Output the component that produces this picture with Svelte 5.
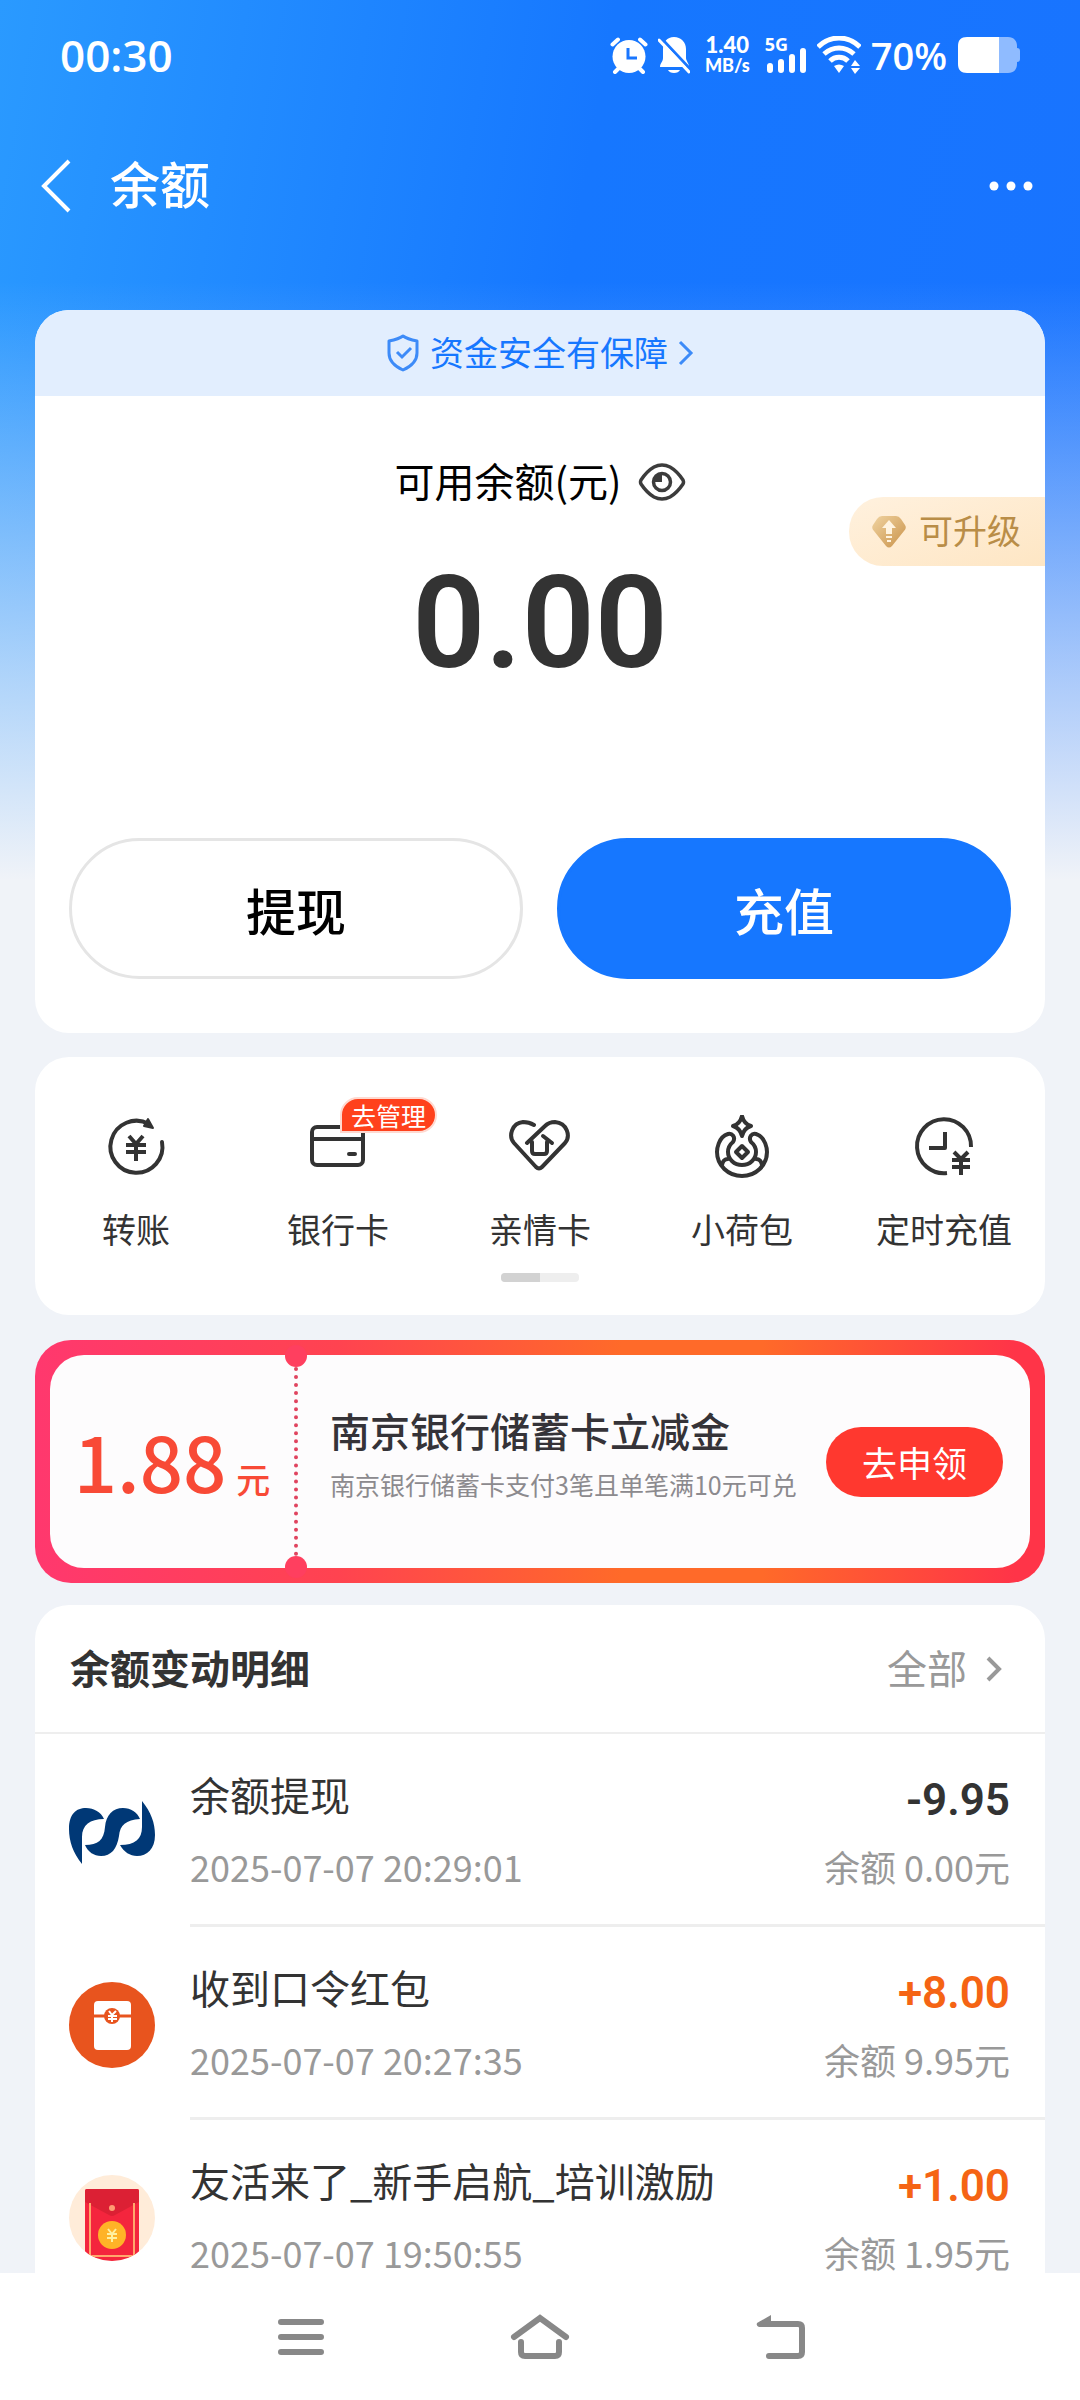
<script lang="ts">
	// Balance page of a wallet app: balance card, shortcuts, promo coupon and change log.
	interface Entry {
		icon: 'bank' | 'packet' | 'envelope';
		title: string;
		time: string;
		amount: string;
		balance: string;
	}

	const shortcuts = [
		{ id: 'transfer', label: '转账', badge: '' },
		{ id: 'card', label: '银行卡', badge: '去管理' },
		{ id: 'family', label: '亲情卡', badge: '' },
		{ id: 'purse', label: '小荷包', badge: '' },
		{ id: 'timer', label: '定时充值', badge: '' }
	];

	const entries: Entry[] = [
		{
			icon: 'bank',
			title: '余额提现',
			time: '2025-07-07 20:29:01',
			amount: '-9.95',
			balance: '0.00'
		},
		{
			icon: 'packet',
			title: '收到口令红包',
			time: '2025-07-07 20:27:35',
			amount: '+8.00',
			balance: '9.95'
		},
		{
			icon: 'envelope',
			title: '友活来了_新手启航_培训激励',
			time: '2025-07-07 19:50:55',
			amount: '+1.00',
			balance: '1.95'
		}
	];

	let hidden = $state(false);
</script>

<div class="screen">
	<div class="content">
		<div class="backdrop"></div>

		<div class="status-bar">
			<span class="clock">00:30</span>
			<div class="status-icons">
				<svg width="38" height="38" viewBox="0 0 38 38">
					<g stroke="#fff" stroke-width="4" stroke-linecap="round" fill="none">
						<path d="M2.500 8.500L8 3.500M35.500 8.500L30 3.500M8 33L5 36M30 33L33 36"></path>
					</g>
					<circle cx="19" cy="20.500" r="16.500" fill="#fff"></circle>
					<path d="M18 12v10h9" fill="none" stroke="#1976ff" stroke-width="3"></path>
				</svg>
				<svg width="32" height="38" viewBox="0 0 32 38">
					<path
						d="M16 1c7 0 12 5 12 12v9c0 3 3 5 3 9H2c0-4 3-5 3-9v-9C5 6 9 1 16 1z"
						fill="#fff"
					></path>
					<path d="M10 34h12c-1 2-3 3-6 3s-5-1-6-3z" fill="#fff"></path>
					<path d="M3 2l30 32" stroke="#1976ff" stroke-width="3"></path>
					<path d="M1 4l30 32" stroke="#fff" stroke-width="3" stroke-linecap="round"></path>
				</svg>
				<div class="speed">
					<span>1.40</span>
					<span class="unit">MB/s</span>
				</div>
				<div class="signal">
					<span>5G</span>
					<svg width="42" height="38" viewBox="0 0 42 38">
						<path
							d="M5 30v4M16 26v8M27 21v13M38 15v19"
							stroke="#fff"
							stroke-width="6"
							stroke-linecap="round"
						></path>
					</svg>
				</div>
				<svg width="44" height="38" viewBox="0 0 44 38">
					<g fill="none" stroke="#fff" stroke-width="5">
						<path d="M1 11C13-1 31-1 43 11"></path>
						<path d="M7 18c9-8 21-8 30 0"></path>
						<path d="M13 25c5-5 13-5 18 0"></path>
					</g>
					<path d="M17 30q5-3 10 0l-5 7zM34 30l4-6 5 6zM34 32h9l-5 6z" fill="#fff"></path>
				</svg>
				<span class="percent">70%</span>
				<svg width="63" height="38" viewBox="0 0 63 38">
					<path
						d="M42 1h9c6 0 9 4 9 9v2c2 0 3 1 3 3v8c0 2-1 3-3 3v2c0 5-3 9-9 9h-9z"
						fill="#8fbbff"
					></path>
					<path d="M10 1h32v36H10c-6 0-9-3-9-9V10c0-6 3-9 9-9z" fill="#fff"></path>
				</svg>
			</div>
		</div>

		<header>
			<button class="back" aria-label="返回">
				<svg width="32" height="54" viewBox="0 0 32 54">
					<path d="M29 2L4 27l25 25" fill="none" stroke="#fff" stroke-width="4"></path>
				</svg>
			</button>
			<h1>余额</h1>
			<button class="more" aria-label="更多">
				<svg width="44" height="10" viewBox="0 0 44 10" fill="#fff">
					<circle cx="5" cy="5" r="4.500"></circle>
					<circle cx="22" cy="5" r="4.500"></circle>
					<circle cx="39" cy="5" r="4.500"></circle>
				</svg>
			</button>
		</header>

		<main>
			<section class="card balance">
				<a class="safety" href="#safety">
					<svg width="34" height="38" viewBox="0 0 34 38" fill="none" stroke="#3d8bf8">
						<path
							d="M17 2c4 3 9 4 14 5v12c0 8-5 13-14 17C8 32 3 27 3 19V7c5-1 10-2 14-5z"
							stroke-width="3"
							stroke-linejoin="round"
						></path>
						<path d="M11 18l5 5 9-9" stroke-width="3"></path>
					</svg>
					<span>资金安全有保障</span>
					<svg width="16" height="26" viewBox="0 0 16 26" fill="none" stroke="#3d8bf8">
						<path d="M2 2l11 11L2 24" stroke-width="3"></path>
					</svg>
				</a>
				<a class="upgrade" href="#upgrade">
					<svg width="36" height="34" viewBox="0 0 36 34">
						<defs>
							<linearGradient id="gold" x1="0" y1="0" x2="1" y2="1">
								<stop offset="0" stop-color="#f0d3a0"></stop>
								<stop offset="1" stop-color="#c9924a"></stop>
							</linearGradient>
						</defs>
						<path
							d="M11 1h14q3 0 5 3l4 6q2 3-1 6L21 31q-3 3-6 0L3 16q-3-3-1-6l4-6q2-3 5-3z"
							fill="url(#gold)"
						></path>
						<path d="M18 5l7 8h-4v6h-6v-6h-4zM15 21h6v2h-6zM16 25h4v2h-4z" fill="#fff3df"></path>
					</svg>
					<span>可升级</span>
				</a>
				<div class="label">
					<span>可用余额(元)</span>
					<button class="eye" aria-label="隐藏余额" onclick={() => (hidden = !hidden)}>
						<svg width="48" height="38" viewBox="0 0 48 38" fill="none" stroke="#3c3c3c">
							<path
								d="M3 17Q9 8 16 4q8-4 16 0 7 4 13 13 1 2 0 4-6 9-13 13-8 4-16 0Q9 30 3 21q-1-2 0-4z"
								stroke-width="3.500"
							></path>
							<circle cx="24" cy="19" r="8.500" stroke-width="3.500"></circle>
							<path d="M24 11v8h-8a8 8 0 0 1 8-8z" fill="#3c3c3c" stroke="none"></path>
						</svg>
					</button>
				</div>
				<div class="total">{hidden ? '****' : '0.00'}</div>
				<div class="actions">
					<button>提现</button>
					<button class="primary">充值</button>
				</div>
			</section>

			<section class="card shortcuts">
				<div class="grid">
					{#each shortcuts as item (item.id)}
						<a href="#{item.id}">
							<span class="icon">
								<svg
									width="64"
									height="64"
									viewBox="0 0 64 64"
									fill="none"
									stroke="#333"
									stroke-width="4"
									stroke-linecap="round"
									stroke-linejoin="round"
								>
									{#if item.id === 'transfer'}
										<path d="M58 27A26 26 0 1 1 45 9"></path>
										<path d="M44 4l5 9-9-2z" fill="#333" stroke-width="2"></path>
										<path
											d="M25 21l7 8 7-8M22 30h20M22 37h20M32 30v16"
											stroke-linecap="butt"
										></path>
									{:else if item.id === 'card'}
										<rect x="6" y="12" width="51" height="38" rx="5"></rect>
										<path d="M6 24h51M43 39h6"></path>
									{:else if item.id === 'family'}
										<path
											d="M26 10Q21 7 15 7C4 8 0 21 6 28l22 24q3 3 6 0l23-24C63 21 59 8 47 7q-6 0-10 4L19 28"
										></path>
										<path d="M35 21l9 7M24 27v9q0 3 3 3h9q3 0 3-3v-9"></path>
									{:else if item.id === 'purse'}
										<path d="M32 1q2 8 9 10-7 2-9 10-2-8-9-10 7-2 9-10z"></path>
										<path
											d="M23 27c3-5-1-9-5-8C8 22 7 35 7 37a25 24 0 0 0 50 0c0-2-1-15-11-18-4-1-8 3-5 8 5 4 5 8 5 10a14 13 0 0 1-28 0c0-2 0-6 5-10z"
										></path>
										<path d="M12 50q1-6 6-6M52 50q-1-6-6-6"></path>
										<path d="M32 31l6 6-6 6-6-6z"></path>
									{:else}
										<path d="M59 32A27 27 0 1 0 35 58" stroke-linecap="butt"></path>
										<path d="M33 17v16H17" stroke-linecap="butt"></path>
										<path d="M42 37l7 7 7-7M40 45h18M40 52h18M49 44v16" stroke-linecap="butt"></path>
									{/if}
								</svg>
								{#if item.badge}
									<em>{item.badge}</em>
								{/if}
							</span>
							{item.label}
						</a>
					{/each}
				</div>
				<div class="pager"><span></span></div>
			</section>

			<section class="promo">
				<div class="coupon">
					<p class="value">1.88<small>元</small></p>
					<div class="perforation"></div>
					<div class="offer">
						<h2>南京银行储蓄卡立减金</h2>
						<p>南京银行储蓄卡支付3笔且单笔满10元可兑</p>
					</div>
					<button>去申领</button>
				</div>
			</section>

			<section class="card log">
				<div class="log-head">
					<h2>余额变动明细</h2>
					<a href="#all">
						<span>全部</span>
						<svg width="18" height="28" viewBox="0 0 18 28" fill="none" stroke="#999">
							<path d="M3 3l11 11L3 25" stroke-width="4"></path>
						</svg>
					</a>
				</div>
				<ul>
					{#each entries as entry (entry.time)}
						<li>
							<svg width="86" height="92" viewBox="0 0 86 92">
								{#if entry.icon === 'bank'}
									<g fill="#003876">
										<path d="M13 79C4 68 0 56 0 44 0 29 7 23 17 23c8 0 15 4 18 11-14 0-22 6-22 18z"></path>
										<path
											d="M16 60c13 0 19-5 20-18 1-12 8-19 18-19 8 0 14 4 17 11-14 1-20 6-21 17-2 13-8 20-18 20-7 0-13-4-16-11z"
										></path>
										<path d="M73 16c9 11 13 22 13 34 0 14-8 21-18 21-7 0-13-4-17-11 15 0 22-6 22-18z"></path>
									</g>
								{:else if entry.icon === 'packet'}
									<circle cx="43" cy="47" r="43" fill="#e8541e"></circle>
									<rect x="25" y="23" width="37" height="49" rx="4" fill="#fff"></rect>
									<path d="M25 38h37" stroke="#e8541e" stroke-width="3"></path>
									<circle cx="43" cy="38" r="8" fill="#e8541e"></circle>
									<path
										d="M40 33l3 4 4-4M39 38h9M39 41h9M43 37v7"
										fill="none"
										stroke="#fff"
										stroke-width="2"
									></path>
								{:else}
									<clipPath id="round"><circle cx="43" cy="47" r="43"></circle></clipPath>
									<g clip-path="url(#round)">
										<rect width="86" height="92" fill="#ffecd9"></rect>
										<path d="M16 20q0-2 2-2h50q2 0 2 2v73H16z" fill="#f4253d"></path>
										<path d="M16 20q0-2 2-2h50q2 0 2 2v11L46 44q-3 2-6 0L16 31z" fill="#dc2034"></path>
										<path
											d="M21 32v53M65 32v53M17 85h52"
											stroke="#ffa76c"
											stroke-width="2"
										></path>
										<circle cx="43" cy="37" r="3" fill="#ff9d72"></circle>
										<circle cx="43" cy="64" r="14" fill="#ffb327"></circle>
										<path
											d="M39 58l4 5 4-5M38 63h10M38 67h10M43 63v8"
											fill="none"
											stroke="#fff0a0"
											stroke-width="2"
										></path>
									</g>
								{/if}
							</svg>
							<div class="entry">
								<div class="line">
									<span>{entry.title}</span>
									<strong class:income={entry.amount.startsWith('+')}>{entry.amount}</strong>
								</div>
								<div class="line meta">
									<time>{entry.time}</time>
									<span>余额 {entry.balance}元</span>
								</div>
							</div>
						</li>
					{/each}
				</ul>
			</section>
		</main>
	</div>

	<nav>
		<button aria-label="最近任务">
			<svg width="46" height="44" viewBox="0 0 46 44">
				<path
					d="M3 7h40M3 22h40M3 37h40"
					stroke="#888"
					stroke-width="6"
					stroke-linecap="round"
				></path>
			</svg>
		</button>
		<button aria-label="主屏幕">
			<svg width="60" height="46" viewBox="0 0 60 46">
				<path
					d="M4 23L30 4l26 19M11 28v10q0 4 4 4h30q4 0 4-4V28"
					fill="none"
					stroke="#888"
					stroke-width="6"
					stroke-linecap="round"
				></path>
			</svg>
		</button>
		<button aria-label="后退">
			<svg width="50" height="46" viewBox="0 0 50 46">
				<path
					d="M13 42h29q4 0 4-4V14q0-4-4-4H6"
					fill="none"
					stroke="#888"
					stroke-width="6"
					stroke-linecap="round"
				></path>
				<path d="M1 9l14-8v12H3q-3-1-2-4z" fill="#888"></path>
			</svg>
		</button>
	</nav>
</div>

<style>
	:global(body) {
		background: #f0f3f8;
	}

	.screen {
		display: flex;
		flex-direction: column;
		height: 100vh;
		font-family: 'Noto Sans CJK SC', sans-serif;
		color: #333;
	}

	.content {
		position: relative;
		flex: 1;
		min-height: 0;
		overflow-y: auto;
		scrollbar-width: none;
	}

	.backdrop {
		position: absolute;
		inset: 0 0 auto;
		height: 880px;
		background:
			linear-gradient(
				to bottom,
				rgba(240, 243, 248, 0) 32%,
				rgba(240, 243, 248, 0.36) 56%,
				rgba(240, 243, 248, 0.68) 77%,
				#f0f3f8
			),
			linear-gradient(100deg, #2a9aff, #1677ff 50%, #1973ff);
	}

	.status-bar,
	header,
	main {
		position: relative;
	}

	h1,
	h2,
	p,
	ul {
		margin: 0;
		padding: 0;
	}

	a {
		color: inherit;
		text-decoration: none;
	}

	button {
		border: none;
		background: none;
		padding: 0;
		font-family: inherit;
		color: inherit;
		cursor: pointer;
	}

	svg {
		display: block;
		flex: none;
	}

	.status-bar {
		display: flex;
		align-items: center;
		justify-content: space-between;
		height: 110px;
		padding: 0 60px;
		color: #fff;
		font-family: 'Open Sans', sans-serif;
	}

	.clock {
		font-size: 44px;
		font-weight: 600;
	}

	.status-icons {
		display: flex;
		align-items: center;
		gap: 10px;
	}

	.speed {
		display: flex;
		flex-direction: column;
		align-items: center;
		padding: 0 5px;
		font-family: Lato, sans-serif;
		font-size: 22px;
		font-weight: 900;
		line-height: 20px;
	}

	.speed .unit {
		font-size: 18px;
	}

	.signal {
		position: relative;
	}

	.signal span {
		position: absolute;
		top: 0;
		left: 0;
		font-size: 18px;
		font-weight: 700;
		line-height: 16px;
	}

	.percent {
		font-size: 38px;
		font-weight: 600;
	}

	header {
		display: flex;
		align-items: center;
		height: 152px;
		padding: 0 47px 0 40px;
		color: #fff;
	}

	h1 {
		flex: 1;
		margin-left: 38px;
		padding-bottom: 8px;
		font-size: 50px;
		font-weight: 500;
		line-height: 60px;
	}

	main {
		padding: 48px 35px 0;
	}

	.card {
		overflow: hidden;
		border-radius: 34px;
		background: #fff;
	}

	.balance {
		position: relative;
		padding-bottom: 54px;
	}

	.safety {
		display: flex;
		align-items: center;
		justify-content: center;
		gap: 10px;
		height: 86px;
		background: #e2eefe;
		color: #1677ff;
		font-size: 34px;
	}

	.safety span,
	.upgrade span,
	.label span,
	.log-head h2,
	.log-head span {
		padding-bottom: 4px;
	}

	.upgrade {
		position: absolute;
		top: 187px;
		right: 0;
		display: flex;
		align-items: center;
		gap: 12px;
		height: 69px;
		padding: 0 24px 0 22px;
		border-radius: 34px 0 0 34px;
		background: linear-gradient(160deg, #fff1de, #fee6c4);
		color: #b98d47;
		font-size: 34px;
	}

	.label {
		display: flex;
		align-items: center;
		justify-content: center;
		gap: 16px;
		height: 60px;
		margin-top: 56px;
		color: #000;
		font-size: 40px;
		line-height: 56px;
	}

	.total {
		margin-top: 36px;
		font-family: Roboto, sans-serif;
		font-size: 128px;
		font-weight: 600;
		line-height: 150px;
		text-align: center;
	}

	.actions {
		display: flex;
		gap: 34px;
		margin-top: 140px;
		padding: 0 34px;
	}

	.actions button {
		flex: 1;
		height: 141px;
		border: 3px solid #e5e5e5;
		border-radius: 71px;
		color: #000;
		font-size: 50px;
		font-weight: 500;
	}

	.actions .primary {
		border-color: #1677ff;
		background: #1677ff;
		color: #fff;
	}

	.shortcuts {
		margin-top: 24px;
		padding: 58px 0 33px;
	}

	.grid {
		display: grid;
		grid-template-columns: repeat(5, 1fr);
	}

	.grid a {
		display: flex;
		flex-direction: column;
		align-items: center;
		gap: 26px;
		font-size: 34px;
		line-height: 48px;
	}

	.icon {
		position: relative;
	}

	.icon em {
		position: absolute;
		top: -18px;
		left: 34px;
		padding: 0 9px;
		border: 2px solid #ffd9d0;
		border-radius: 18px 18px 18px 0;
		background: #ff411c;
		color: #fff;
		font-size: 25px;
		font-style: normal;
		line-height: 32px;
		white-space: nowrap;
	}

	.pager {
		width: 78px;
		height: 9px;
		margin: 20px auto 0;
		overflow: hidden;
		border-radius: 4px;
		background: #eee;
	}

	.pager span {
		display: block;
		width: 50%;
		height: 100%;
		background: #d2d2d2;
	}

	.promo {
		margin-top: 25px;
		padding: 15px;
		border-radius: 36px;
		background: linear-gradient(to right, #ff386e, #ff4350 30%, #ff6a29 58%, #ff6a29 72%, #ff3448 97%);
	}

	.coupon {
		position: relative;
		display: flex;
		align-items: center;
		height: 213px;
		border-radius: 34px;
		background: #fdfcfd;
	}

	.value {
		box-sizing: border-box;
		width: 244px;
		padding-top: 16px;
		color: #f84a36;
		font-size: 76px;
		font-weight: 500;
		line-height: 100px;
		text-align: center;
		white-space: nowrap;
	}

	.value small {
		margin-left: 10px;
		font-size: 34px;
	}

	.perforation {
		position: relative;
		align-self: stretch;
		margin: 12px 0;
		border-left: 4px dotted #e0445f;
	}

	.perforation::before,
	.perforation::after {
		content: '';
		position: absolute;
		left: -13px;
		width: 22px;
		height: 22px;
		border-radius: 50%;
		background: #ff3f5f;
	}

	.perforation::before {
		top: -22px;
	}

	.perforation::after {
		bottom: -22px;
	}

	.offer {
		flex: 1;
		margin-left: 32px;
		padding-bottom: 16px;
		color: #8c8a8e;
		font-size: 25px;
		line-height: 48px;
		white-space: nowrap;
	}

	.offer h2 {
		color: #353338;
		font-size: 40px;
		font-weight: 500;
		line-height: 60px;
	}

	.coupon button {
		height: 70px;
		margin-right: 27px;
		padding: 0 36px;
		border-radius: 35px;
		background: #ff382f;
		color: #fff;
		font-size: 35px;
	}

	.log {
		margin-top: 22px;
	}

	.log-head {
		display: flex;
		align-items: center;
		justify-content: space-between;
		height: 127px;
		padding: 0 42px 0 35px;
		border-bottom: 2px solid #eee;
	}

	.log-head h2 {
		font-size: 40px;
		font-weight: 700;
	}

	.log-head a {
		display: flex;
		align-items: center;
		gap: 18px;
		color: #999;
		font-size: 40px;
	}

	li {
		display: flex;
		align-items: center;
		gap: 35px;
		padding-left: 34px;
	}

	.entry {
		flex: 1;
		padding: 30px 35px 40px 0;
		border-bottom: 3px solid #eee;
	}

	.line {
		display: flex;
		align-items: flex-end;
		justify-content: space-between;
		font-size: 40px;
		line-height: 60px;
	}

	.line strong {
		font-family: Roboto, sans-serif;
		font-size: 44px;
		font-weight: 600;
		line-height: 48px;
	}

	.line .income {
		color: #f56414;
	}

	.meta {
		margin-top: 24px;
		color: #999;
		font-size: 36px;
		line-height: 36px;
	}

	nav {
		display: flex;
		justify-content: center;
		gap: 186px;
		height: 127px;
		padding-left: 4px;
		background: #fff;
	}
</style>
